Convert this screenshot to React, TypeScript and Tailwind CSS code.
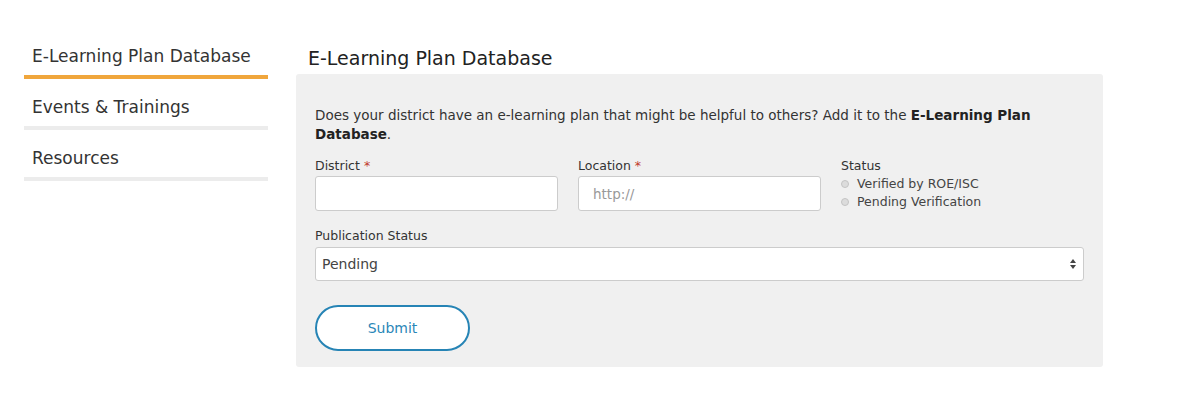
const font = "font-['DejaVu_Sans',sans-serif]"

function SideItem({ label, active }: { label: string; active?: boolean }) {
  return (
    <div className={`pl-2 pt-[7px] pb-[6px] border-b-4 ${active ? 'border-[#f0a63c]' : 'border-[#ececec]'}`}>
      <span className="text-[17px] leading-[24px] text-[#333]">{label}</span>
    </div>
  )
}

function Radio({ label }: { label: string }) {
  return (
    <label className="flex items-center gap-[8px] text-[12.5px] leading-[18px] text-[#444]">
      <span className="w-[8px] h-[8px] rounded-full border border-[#c4c4c4] bg-[#dcdcdc]"></span>
      {label}
    </label>
  )
}

export default function App() {
  return (
    <div className={`${font} bg-white w-[1200px] h-[394px] flex pt-[37px] pl-6`}>
      <nav className="w-[244px] flex flex-col gap-[9px]">
        <SideItem label="E-Learning Plan Database" active />
        <SideItem label="Events & Trainings" />
        <SideItem label="Resources" />
      </nav>

      <main className="ml-7 w-[807px]">
        <h1 className="pl-3 text-[19px] leading-[24px] font-medium text-[#222] pt-[9px] pb-[4px]">
          E-Learning Plan Database
        </h1>
        <div className="bg-[#f0f0f0] rounded-[3px] px-[19px] pt-[32px] pb-[16px]">
          <p className="text-[13.5px] leading-[19px] text-[#333]">
            Does your district have an e-learning plan that might be helpful to others? Add it to the{' '}
            <b className="font-bold text-[#222]">E-Learning Plan Database</b>.
          </p>

          <div className="grid grid-cols-3 gap-5 mt-[13px]">
            <div>
              <div className="text-[12.5px] leading-[18px] font-medium text-[#333]">
                District <span className="text-[#c0392b]">*</span>
              </div>
              <input className="mt-[1px] w-full h-[35px] bg-white border border-[#ccc] rounded-[3px]" />
            </div>
            <div>
              <div className="text-[12.5px] leading-[18px] font-medium text-[#333]">
                Location <span className="text-[#c0392b]">*</span>
              </div>
              <input
                placeholder="http://"
                className="mt-[1px] w-full h-[35px] bg-white border border-[#ccc] rounded-[3px] px-[14px] text-[13.5px] placeholder:text-[#999]"
              />
            </div>
            <div>
              <div className="text-[12.5px] leading-[18px] font-medium text-[#333]">Status</div>
              <Radio label="Verified by ROE/ISC" />
              <Radio label="Pending Verification" />
            </div>
          </div>

          <div className="mt-[16px] text-[12.5px] leading-[18px] font-medium text-[#333]">Publication Status</div>
          <div className="mt-[2px] h-[34px] bg-white border border-[#ccc] rounded-[3px] flex items-center justify-between pl-[6px] pr-[6px]">
            <span className="text-[14px] text-[#444]">Pending</span>
            <svg width="8" height="12" viewBox="0 0 8 12">
              <path d="M4 1 L7 5 H1 Z" fill="#444" />
              <path d="M4 11 L7 7 H1 Z" fill="#444" />
            </svg>
          </div>

          <button className="mt-[24px] w-[155px] h-[46px] rounded-full border-2 border-[#2684b5] bg-white text-[14px] text-[#2a87b8]">
            Submit
          </button>
        </div>
      </main>
    </div>
  )
}
